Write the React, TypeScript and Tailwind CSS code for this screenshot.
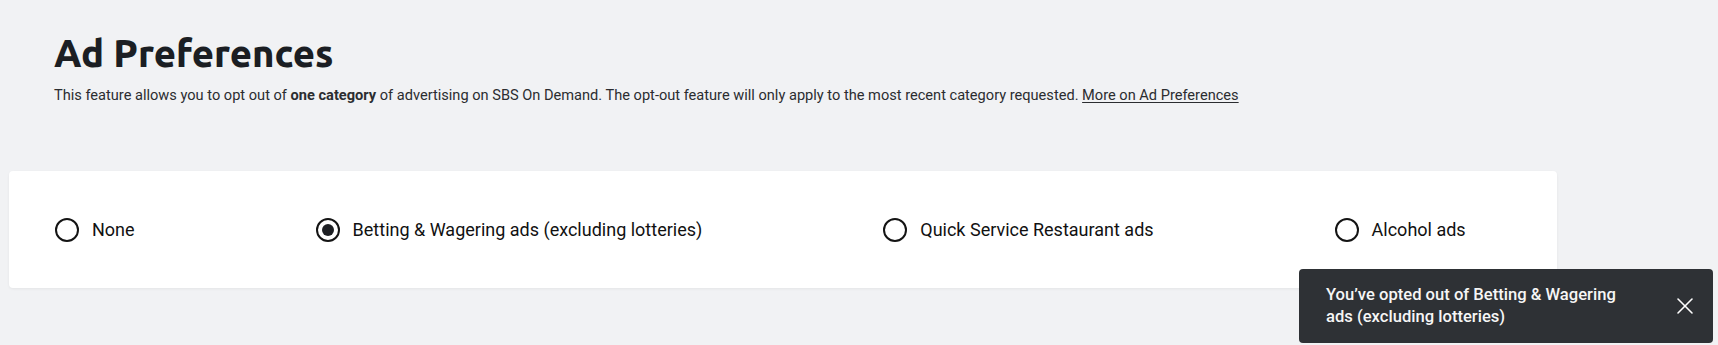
import { X } from "lucide-react";

const options = [
  { id: "none", label: "None" },
  { id: "betting", label: "Betting & Wagering ads (excluding lotteries)" },
  { id: "qsr", label: "Quick Service Restaurant ads" },
  { id: "alcohol", label: "Alcohol ads" },
];

function Radio({ checked }: { checked: boolean }) {
  return (
    <span className="flex h-[24px] w-[24px] shrink-0 items-center justify-center rounded-full border-2 border-[#141414]">
      {checked && <span className="h-[12px] w-[12px] rounded-full bg-[#1d1f23]" />}
    </span>
  );
}

export default function App() {
  const selected = "betting";

  return (
    <div className="relative h-[345px] w-full overflow-hidden bg-[#f1f2f4] font-['Roboto',sans-serif]">
      <div className="pl-[54px] pt-[29px]">
        <h1 className="font-['Ubuntu','Open_Sans',sans-serif] text-[38.2px] font-black leading-[48px] text-[#1b1e23]">
          Ad Preferences
        </h1>
        <p className="mt-[8px] text-[14.6px] leading-[20px] text-[#2b2d30]">
          This feature allows you to opt out of <strong className="font-bold">one category</strong> of
          advertising on SBS On Demand. The opt-out feature will only apply to the most recent category
          requested.{" "}
          <a href="#" className="underline underline-offset-2">
            More on Ad Preferences
          </a>
        </p>
      </div>

      <div className="ml-[9px] mt-[66px] flex h-[117px] w-[1548px] items-center gap-[181px] rounded bg-white pl-[46px] shadow-[0_1px_3px_rgba(0,0,0,0.06)]">
        {options.map((o) => (
          <label key={o.id} className="flex cursor-pointer items-center gap-[13px]">
            <Radio checked={o.id === selected} />
            <span className="text-[18px] leading-[24px] text-[#111]">{o.label}</span>
          </label>
        ))}
      </div>

      <div className="absolute left-[1299px] top-[269px] flex h-[74px] w-[414px] items-center justify-between rounded bg-[#2e3135] pl-[27px] pr-[12px]">
        <p className="w-[310px] text-[16.6px] font-medium leading-[22px] text-[#f6f6f6]">
          You’ve opted out of Betting &amp; Wagering ads (excluding lotteries)
        </p>
        <button className="flex h-[32px] w-[32px] items-center justify-center text-white">
          <X size={28} strokeWidth={1.3} />
        </button>
      </div>
    </div>
  );
}
